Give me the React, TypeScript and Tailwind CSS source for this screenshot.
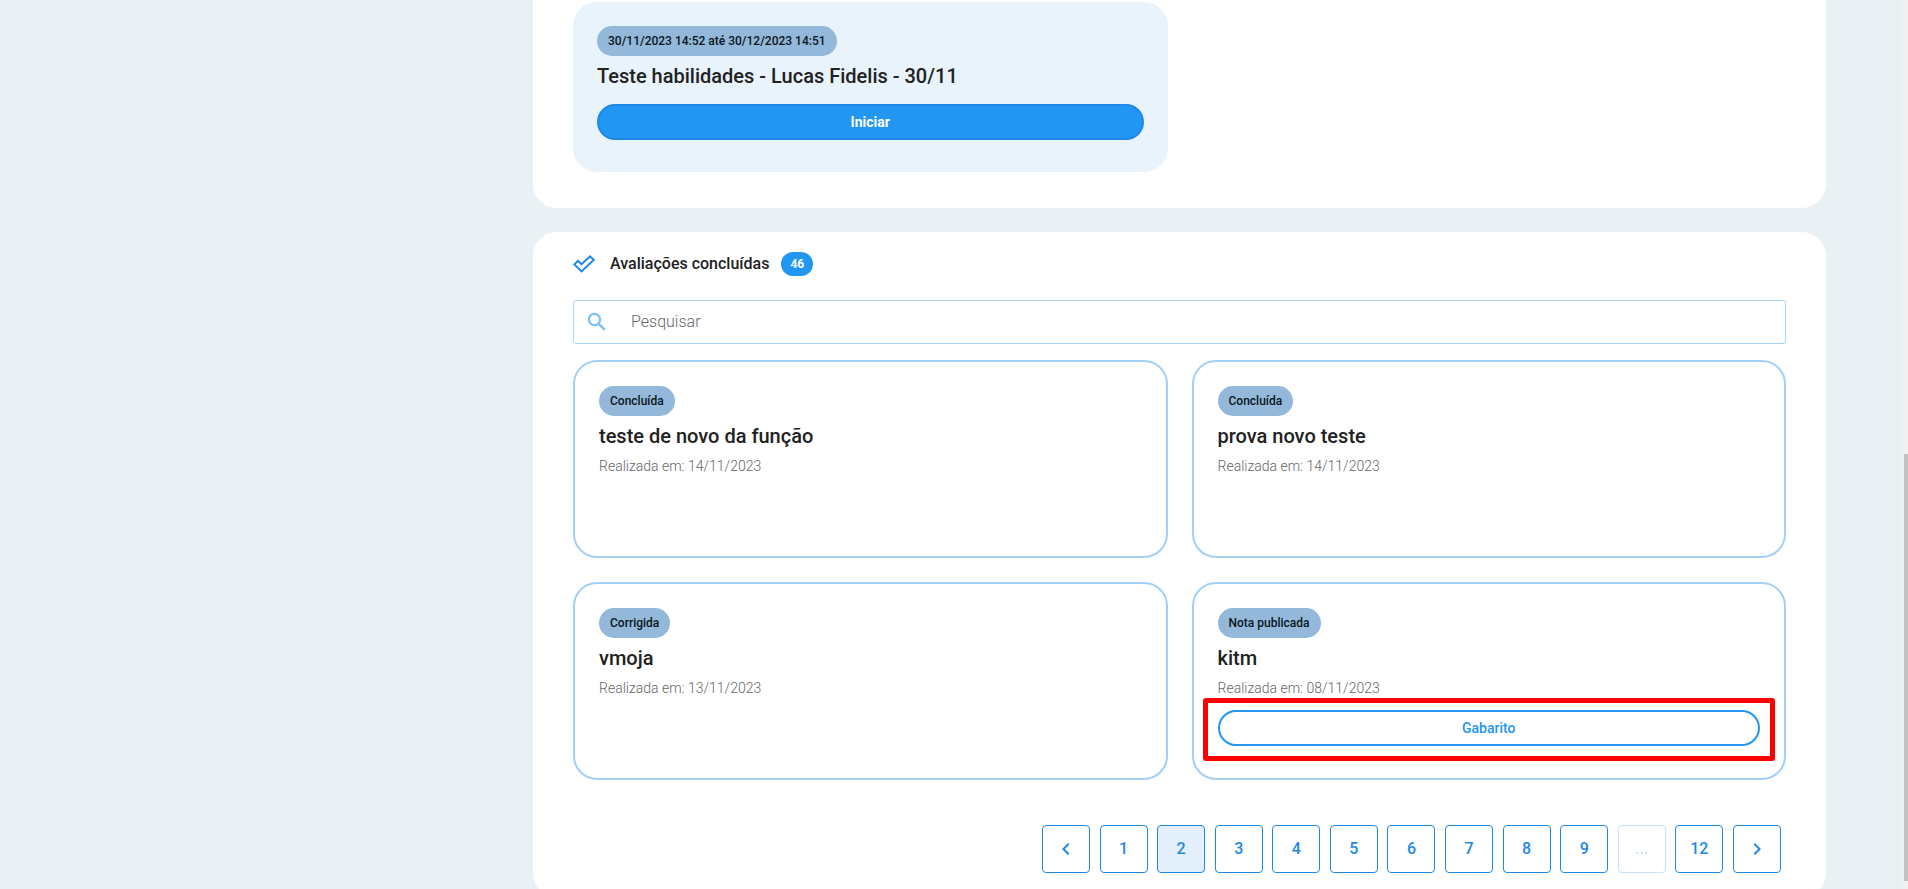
import React, { useState } from 'react';
import { MdChevronLeft, MdChevronRight } from 'react-icons/md';

interface Assessment {
  id: number;
  status: string;
  title: string;
  date: string;
  hasAnswerKey?: boolean;
}

const assessments: Assessment[] = [
  { id: 1, status: 'Concluída', title: 'teste de novo da função', date: '14/11/2023' },
  { id: 2, status: 'Concluída', title: 'prova novo teste', date: '14/11/2023' },
  { id: 3, status: 'Corrigida', title: 'vmoja', date: '13/11/2023' },
  { id: 4, status: 'Nota publicada', title: 'kitm', date: '08/11/2023', hasAnswerKey: true },
];

const pages = ['1', '2', '3', '4', '5', '6', '7', '8', '9', '...', '12'];

const CheckOutlineIcon: React.FC = () => (
  <svg viewBox="0 0 22 18" className="w-[22px] h-[18px]" fill="none" stroke="#1e88e5" strokeWidth="2" aria-hidden="true">
    <path d="M1.4 9.4 L4.9 5.9 L8.5 9.2 L17 1.4 L20.6 4.9 L8.5 16.4 Z" />
  </svg>
);

const SearchIcon: React.FC = () => (
  <svg viewBox="0 0 24 24" className="w-6 h-6" fill="none" stroke="#7cc0fa" strokeWidth="2.2" aria-hidden="true">
    <circle cx="9.5" cy="9.5" r="5.6" />
    <path d="M13.8 13.8 L19.8 19.8" strokeWidth="2.6" />
  </svg>
);

const Chip: React.FC<{ label: string }> = ({ label }) => (
  <span className="inline-flex items-center h-[30px] px-[11px] rounded-full bg-[#93b8da] text-xs font-medium text-[#0b141c]">
    {label}
  </span>
);

const AssessmentCard: React.FC<{ item: Assessment }> = ({ item }) => (
  <article className="min-h-[198px] border-2 border-[#a3d0f7] rounded-3xl p-6">
    <Chip label={item.status} />
    <h3 className="mt-1 text-xl leading-8 font-medium">{item.title}</h3>
    <p className="mt-1 text-sm leading-5 font-light text-[#666]">Realizada em: {item.date}</p>
    {item.hasAnswerKey && (
      <div className="relative mt-3">
        <button className="w-full h-9 rounded-full border-2 border-[#2196f3] text-sm font-medium text-[#2196f3]">
          Gabarito
        </button>
        <div className="absolute -inset-x-[15px] -top-3 -bottom-[15px] border-[5px] border-[#ff0000] rounded-[3px] pointer-events-none" />
      </div>
    )}
  </article>
);

const pageButton = 'flex items-center justify-center w-12 h-12 rounded border border-[#1e88e5] text-base font-medium text-[#1e88e5]';

const Pagination: React.FC = () => {
  const [current, setCurrent] = useState('2');

  return (
    <nav className="flex justify-between w-[739px] max-w-full ml-auto mr-[5px] mt-[45px]" aria-label="Paginação">
      <button className={pageButton} aria-label="Página anterior">
        <MdChevronLeft className="w-6 h-6" />
      </button>
      {pages.map((page) => (
        <button
          key={page}
          className={`${pageButton} ${page === current ? 'bg-[#e3effb]' : ''} ${page === '...' ? 'opacity-25' : ''}`}
          disabled={page === '...'}
          onClick={() => setCurrent(page)}
        >
          {page}
        </button>
      ))}
      <button className={pageButton} aria-label="Próxima página">
        <MdChevronRight className="w-6 h-6" />
      </button>
    </nav>
  );
};

const App: React.FC = () => {
  const [search, setSearch] = useState('');

  return (
    <div className="flex h-screen overflow-hidden bg-[#e9f1f4] font-[Roboto,sans-serif] text-[#212121]">
      <main className="flex-1 min-w-0 ml-[533px] mr-[76px]">
        <section className="bg-white rounded-b-3xl px-10 pt-0.5 pb-9">
          <div className="grid grid-cols-2 gap-6">
            <article className="bg-[#e8f3fc] rounded-3xl px-6 pt-6 pb-8">
              <Chip label="30/11/2023 14:52 até 30/12/2023 14:51" />
              <h3 className="mt-1 text-xl leading-8 font-medium">Teste habilidades - Lucas Fidelis - 30/11</h3>
              <button className="w-full h-9 mt-3 rounded-full border-2 border-[#1e88e5] bg-[#2196f3] text-sm font-bold text-white">
                Iniciar
              </button>
            </article>
          </div>
        </section>

        <section className="mt-6 bg-white rounded-3xl px-10 pt-5 pb-6">
          <header className="flex items-center h-6">
            <CheckOutlineIcon />
            <h2 className="ml-[15px] text-base font-medium">Avaliações concluídas</h2>
            <span className="ml-3 flex items-center justify-center w-8 h-6 rounded-full bg-[#2196f3] text-xs font-bold text-white">
              46
            </span>
          </header>

          <label className="mt-6 flex items-center h-11 border border-[#a9d5fb] rounded-[3px] pl-[11px]">
            <SearchIcon />
            <input
              type="text"
              value={search}
              onChange={(e) => setSearch(e.target.value)}
              placeholder="Pesquisar"
              aria-label="Pesquisar"
              className="flex-1 ml-[22px] text-base font-light outline-none placeholder:text-[#666]"
            />
          </label>

          <div className="mt-4 grid grid-cols-2 gap-6">
            {assessments.map((item) => (
              <AssessmentCard key={item.id} item={item} />
            ))}
          </div>

          <Pagination />
        </section>
      </main>

      <div className="w-1.5 bg-[#f1f1f1] pl-0.5 pt-[454px] pb-2">
        <div className="h-full bg-[#c1c1c1]" />
      </div>
    </div>
  );
};

export default App;
